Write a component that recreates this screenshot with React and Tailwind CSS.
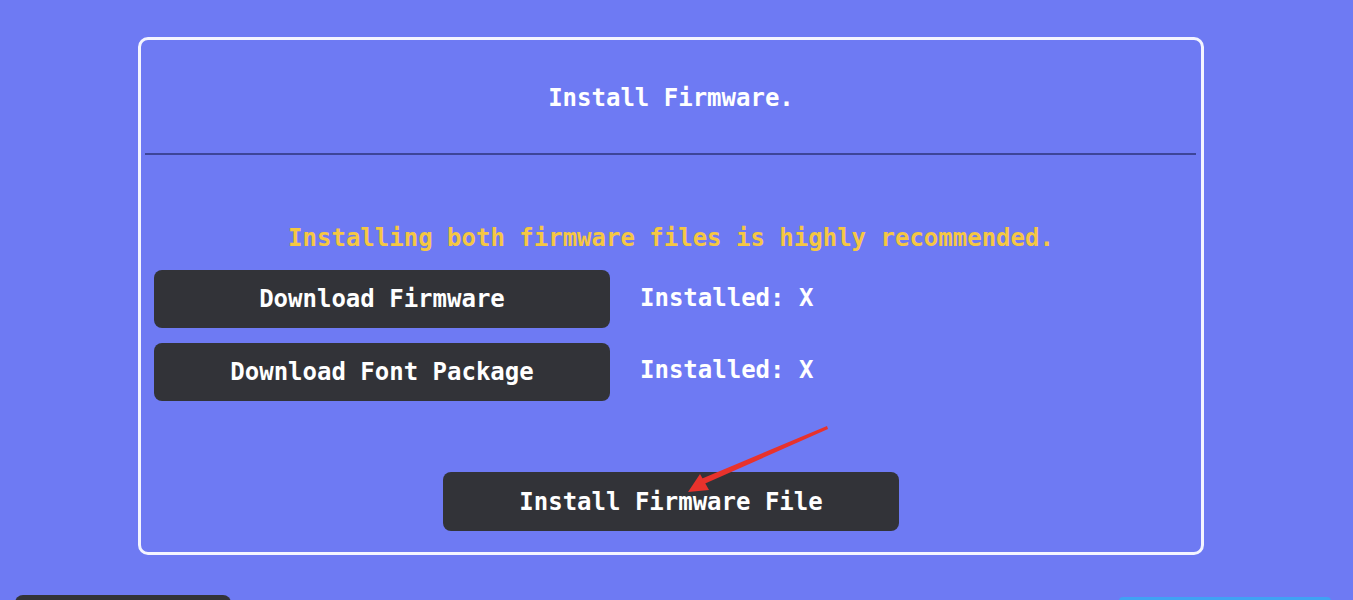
import React from "react";

const mono = { fontFamily: '"DejaVu Sans Mono", "Liberation Mono", monospace' };

function DarkButton({ children, className = "" }) {
  return (
    <div
      className={`flex items-center justify-center rounded-lg bg-[#323338] text-[24px] font-bold text-white ${className}`}
    >
      {children}
    </div>
  );
}

export default function App() {
  return (
    <div
      className="relative h-[600px] w-[1353px] overflow-hidden bg-[#6e7af3]"
      style={mono}
    >
      <div className="pl-[138px] pt-[37px]">
        <div className="flex h-[518px] w-[1066px] flex-col rounded-[10px] border-[3px] border-[#f4f5ff]">
          <div className="flex h-[113px] items-center justify-center pt-[2px] text-[24px] font-bold text-white">
            Install Firmware.
          </div>
          <div className="ml-[4px] mr-[5px] h-[2px] bg-[#3d4598]" />
          <div className="flex flex-1 flex-col pl-[13px]">
            <div className="mt-[68px] flex h-[30px] items-center justify-center pr-[13px] text-[24px] font-bold text-[#f5c743]">
              Installing both firmware files is highly recommended.
            </div>
            <div className="mt-[17px] flex items-center">
              <DarkButton className="h-[58px] w-[456px]">Download Firmware</DarkButton>
              <div className="ml-[30px] -mt-[3px] text-[24px] font-bold text-white">Installed: X</div>
            </div>
            <div className="mt-[15px] flex items-center">
              <DarkButton className="h-[58px] w-[456px]">Download Font Package</DarkButton>
              <div className="ml-[30px] -mt-[5px] text-[24px] font-bold text-white">Installed: X</div>
            </div>
            <div className="mt-[71px] flex pl-[289px]">
              <DarkButton className="h-[59px] w-[456px]">Install Firmware File</DarkButton>
            </div>
          </div>
        </div>
      </div>
      <div className="mt-[40px] flex justify-between">
        <div className="ml-[15px] h-[20px] w-[216px] rounded-t-lg bg-[#323338]" />
        <div className="mr-[22px] mt-[2px] h-[20px] w-[212px] rounded-t bg-[#3fa2f4]" />
      </div>
      <svg
        className="pointer-events-none absolute left-0 top-0"
        width="1353"
        height="600"
        viewBox="0 0 1353 600"
      >
        <polygon points="827,426 828,429 704,484 701,479" fill="#e8322c" />
        <polygon points="688,492 700,474 709,490" fill="#e8322c" />
      </svg>
    </div>
  );
}
